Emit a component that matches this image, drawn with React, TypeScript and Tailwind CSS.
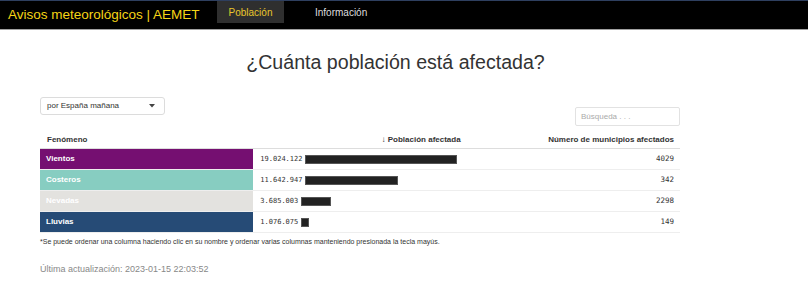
import React from "react";

const rows = [
  { name: "Vientos", bg: "bg-[#750f71]", text: "text-white", pop: "19.024.122", w: 152, mun: "4029" },
  { name: "Costeros", bg: "bg-[#87cdc1]", text: "text-white", pop: "11.642.947", w: 93, mun: "342" },
  { name: "Nevadas", bg: "bg-[#e3e2df]", text: "text-white", pop: "3.685.003", w: 30, mun: "2298" },
  { name: "Lluvias", bg: "bg-[#264b76]", text: "text-white", pop: "1.076.075", w: 8, mun: "149" },
];

export default function App() {
  return (
    <div className="w-[808px] h-[285px] bg-white overflow-hidden" style={{ fontFamily: '"Liberation Sans", Arial, sans-serif' }}>
      <nav className="h-[30px] bg-black border-t border-t-[#2e3f5f] border-b border-b-[#a0a0a0] flex items-start">
        <div className="pl-[8px] h-[28px] flex items-center text-[13.5px] text-[#f5d516] w-[217px]">
          Avisos meteorológicos | AEMET
        </div>
        <div className="h-[22px] w-[67px] bg-[#2f2f2f] flex items-center justify-center text-[10px] text-[#e8c62c]">
          Población
        </div>
        <div className="h-[22px] pl-[31px] flex items-center text-[10px] text-[#dedede]">Información</div>
      </nav>

      <div className="pl-[40px]">
        <h1 className="mt-[21px] w-[711px] text-center text-[19.6px] leading-[23px] text-[#333]">
          ¿Cuánta población está afectada?
        </h1>

        <div className="w-[640px] mt-[23px] flex items-start justify-between">
          <div className="w-[125px] h-[18px] border border-[#dcdcdc] rounded-[3px] flex items-center justify-between pl-[6px] pr-[9px] text-[8px] text-[#333]">
            <span>por España mañana</span>
            <svg width="6" height="4" viewBox="0 0 6 4"><path d="M0 0 L6 0 L3 3.5 Z" fill="#444" /></svg>
          </div>
          <div className="mt-[10px] w-[105px] h-[19px] border border-[#e2e2e2] rounded-[2px] flex items-center pl-[5px] text-[8px] text-[#aaa]">
            Búsqueda . . .
          </div>
        </div>

        <div className="w-[640px] mt-[6px]">
          <div className="h-[17px] grid grid-cols-3 border-b border-[#dddddd] items-center text-[8px] font-bold text-[#333]">
            <div className="pl-[7px]">Fenómeno</div>
            <div className="text-right pr-[6px]">↓ Población afectada</div>
            <div className="text-right pr-[6px]">Número de municipios afectados</div>
          </div>
          {rows.map((r) => (
            <div key={r.name} className="h-[21px] grid grid-cols-3 border-b border-[#eeeeee]">
              <div className={`${r.bg} ${r.text} text-[8px] font-bold flex items-center pl-[6px]`}>{r.name}</div>
              <div className="flex items-center pl-[7px] gap-[3px]">
                <span className="text-[7px] text-[#333]" style={{ fontFamily: '"DejaVu Sans Mono", monospace' }}>{r.pop}</span>
                <div className="h-[9px] bg-[#222] border border-[#555]" style={{ width: r.w }} />
              </div>
              <div className="flex items-center justify-end pr-[6px] text-[7.5px] text-[#333]" style={{ fontFamily: '"DejaVu Sans Mono", monospace' }}>
                {r.mun}
              </div>
            </div>
          ))}
        </div>

        <p className="mt-[4px] text-[7px] leading-[9px] text-[#333]">
          *Se puede ordenar una columna haciendo clic en su nombre y ordenar varias columnas manteniendo presionada la tecla mayús.
        </p>
        <p className="mt-[18px] text-[9px] leading-[11px] text-[#888]">Última actualización: 2023-01-15 22:03:52</p>
      </div>
    </div>
  );
}
